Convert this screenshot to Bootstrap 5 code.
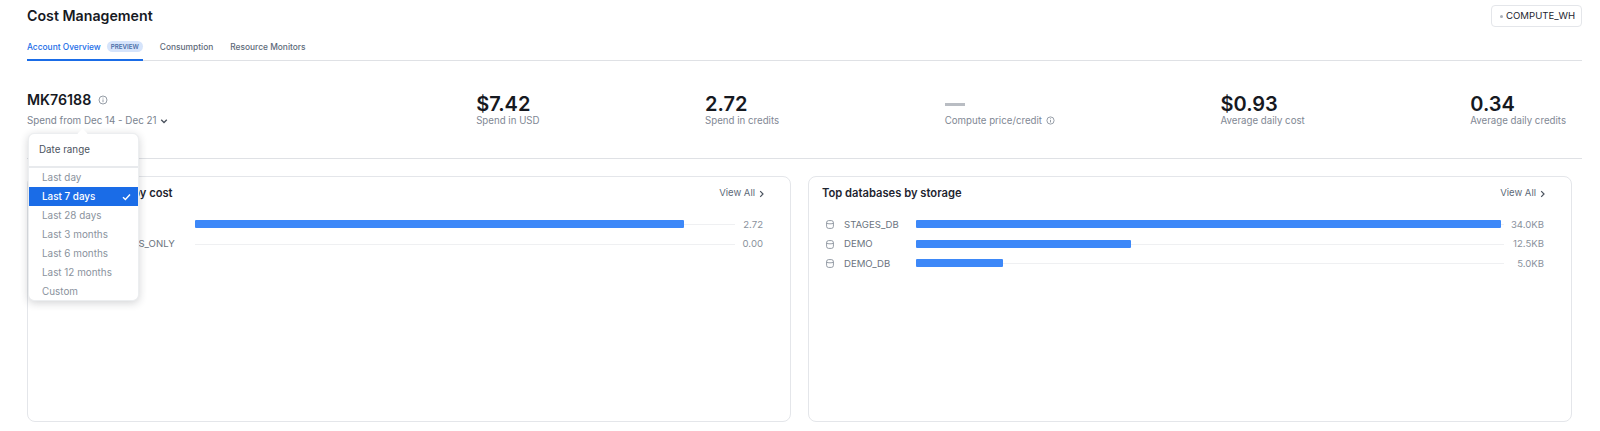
<!doctype html>
<html lang="en">
<head>
<meta charset="utf-8">
<title>Cost Management</title>
<link rel="stylesheet" href="https://cdn.jsdelivr.net/npm/bootstrap@5.3.0/dist/css/bootstrap.min.css">
<style>
html,body{height:431px;overflow:hidden}
body{font-family:Inter,"Liberation Sans",sans-serif;background:#fff;color:#1e252f}
.shell{position:relative;padding:5px 18px 0 27px;height:431px}
.topbar{height:29px}
.page-title{font-size:14.2px;font-weight:600;margin:2px 0 0;line-height:18px;color:#16191f}
.wh-btn{width:91px;height:22px;border:1px solid #e4e6ea;border-radius:4px;background:#fff;font-size:9.6px;color:#1e252f;padding:0 0 0 8px;gap:3px}
.wh-dot{width:3px;height:3px;border-radius:50%;background:#a9afb8}
.tabbar{border-bottom:1px solid #dfe1e5;height:27px;gap:17px}
.tab-item{font-size:8.4px;font-weight:500;color:#5d6a79;height:27px;padding-top:8px;line-height:11px;white-space:nowrap}
.tab-active{color:#1a6ce7;border-bottom:2px solid #1a6ce7;gap:6px;margin-bottom:-1px;height:27px}
.preview-pill{font-size:6.2px;font-weight:600;background:#d6e4fb;color:#4d6fa8;border-radius:6px;padding:0 4px;height:11px;line-height:11px;width:36px;text-align:center;margin-top:-1px}
.stats{height:98px;border-bottom:1px solid #dfe1e5;padding:29px 16px 0 0}
.acct{font-size:14.2px;font-weight:600;color:#16191f;line-height:20px;gap:7px}
.sub{font-size:9.7px;color:#7f8894;line-height:13px;white-space:nowrap}
.acct-sub{font-size:9.8px;margin-top:4px;gap:4px;color:#7a838f}
.stat-item{margin-left:165.500px;padding-top:2px}
.stat-first{margin-left:auto}
.stat-val{font-size:20px;font-weight:600;line-height:24px;color:#16191f;height:22px}
.stat-dash{padding-top:11px}
.dash{display:block;width:20px;height:3px;background:#b9bdc3}
.cards{gap:17px;padding:17px 10px 0 0}
.panel{flex:1 1 0;height:246px;border:1px solid #e4e6ea;border-radius:8px;padding:6px 13px;min-width:0}
.panel-title{font-size:11.2px;font-weight:600;color:#1e252f;line-height:14px}
.view-all{font-size:9.5px;color:#5d6a79;gap:3px;text-decoration:none;margin-right:12px;margin-top:1px}
.panel-head{height:14px;margin:3px 0 15px}
.rows{padding-right:14px}
.bar-row{height:19.5px;font-size:9.6px;color:#6b7480}
.bar-label{width:94px;gap:10px;white-space:nowrap;padding-left:4px;flex:none}
.bar-label-wide{width:154px}
.bar-track{flex:1 1 0;height:1px;background:#eff0f2;position:relative}
.bar-fill{position:absolute;left:0;top:-4px;height:8px;background:#3d88f8;border-radius:1px}
.bar-val{width:40px;text-align:right;flex:none;color:#8a929d}
.bar-val-narrow{width:28px}
.date-menu{display:block;left:28px;top:133px;width:111px;height:168px;padding:0;font-size:9.5px;border:1px solid #eceef0;border-radius:6px;box-shadow:0 2px 8px rgba(30,37,47,.2);--bs-dropdown-min-width:0;z-index:5}
.date-menu::before{content:"";position:absolute;left:50px;top:-4px;width:7px;height:7px;background:#fff;transform:rotate(45deg)}
.date-menu .dropdown-header{font-size:9.8px;color:#4b535e;padding:9px 10px 0;height:32px;line-height:14px;position:relative}
.date-menu .dropdown-divider{margin:0;border-color:#e8eaed;border-top-width:2px}
.date-menu .dropdown-item{font-size:9.9px;color:#8a929d;padding:0 13px;height:19px;line-height:19px}
.date-menu .dropdown-item.active{background:#1a6ce7;color:#fff;font-weight:500}
.check-mark{margin-right:-6px}
</style>
</head>
<body>
<div class="shell">
  <div class="topbar d-flex justify-content-between align-items-start">
    <h1 class="page-title">Cost Management</h1>
    <button class="wh-btn d-flex align-items-center" type="button"><span class="wh-dot"></span>COMPUTE_WH</button>
  </div>
  <nav class="tabbar d-flex">
    <div class="tab-item tab-active d-flex">Account Overview <span class="preview-pill">PREVIEW</span></div>
    <div class="tab-item">Consumption</div>
    <div class="tab-item">Resource Monitors</div>
  </nav>
  <section class="stats d-flex">
    <div>
      <div class="acct d-flex align-items-center">MK76188
        <svg width="10" height="10" viewBox="0 0 10 10" fill="none" stroke="#8a929d" stroke-width=".9"><circle cx="5" cy="5" r="4"/><path d="M5 4.400v2.800M5 2.600v.9"/></svg>
      </div>
      <div class="sub acct-sub d-flex align-items-center">Spend from Dec 14 - Dec 21
        <svg width="8" height="8" viewBox="0 0 8 8" fill="none" stroke="#4b535e" stroke-width="1.3"><path d="M1.200 2.800 4 5.500l2.800-2.700"/></svg>
      </div>
    </div>
    <div class="stat-item stat-first"><div class="stat-val">$7.42</div><div class="sub">Spend in USD</div></div>
    <div class="stat-item"><div class="stat-val">2.72</div><div class="sub">Spend in credits</div></div>
    <div class="stat-item"><div class="stat-val stat-dash"><span class="dash"></span></div><div class="sub d-flex align-items-center gap-1">Compute price/credit
      <svg width="9" height="9" viewBox="0 0 10 10" fill="none" stroke="#7f8894" stroke-width=".9"><circle cx="5" cy="5" r="4"/><path d="M5 4.400v2.800M5 2.600v.9"/></svg></div></div>
    <div class="stat-item"><div class="stat-val">$0.93</div><div class="sub">Average daily cost</div></div>
    <div class="stat-item"><div class="stat-val">0.34</div><div class="sub">Average daily credits</div></div>
  </section>
  <section class="cards d-flex">
    <div class="panel">
      <div class="panel-head d-flex justify-content-between align-items-center">
        <div class="panel-title">Top warehouses by cost</div>
        <a class="view-all d-flex align-items-center" href="#">View All <svg width="7" height="8" viewBox="0 0 7 8" fill="none" stroke="#4b535e" stroke-width="1.2"><path d="M2.200 1.200 5 4 2.200 6.800"/></svg></a>
      </div>
      <div class="rows">
      <div class="bar-row d-flex align-items-center"><div class="bar-label bar-label-wide d-flex align-items-center">COMPUTE_WH</div>
        <div class="bar-track"><div class="bar-fill" style="width:90.5%"></div></div><div class="bar-val bar-val-narrow">2.72</div></div>
      <div class="bar-row d-flex align-items-center"><div class="bar-label bar-label-wide d-flex align-items-center"><span class="ps-3">CLOUD_SERVICES_ONLY</span></div>
        <div class="bar-track"></div><div class="bar-val bar-val-narrow">0.00</div></div>
      </div>
    </div>
    <div class="panel">
      <div class="panel-head d-flex justify-content-between align-items-center">
        <div class="panel-title">Top databases by storage</div>
        <a class="view-all d-flex align-items-center" href="#">View All <svg width="7" height="8" viewBox="0 0 7 8" fill="none" stroke="#4b535e" stroke-width="1.2"><path d="M2.200 1.200 5 4 2.200 6.800"/></svg></a>
      </div>
      <div class="rows">
      <div class="bar-row d-flex align-items-center"><div class="bar-label d-flex align-items-center">
        <svg width="8" height="9" viewBox="0 0 8 9" fill="none" stroke="#7a838f" stroke-width=".8"><rect x=".6" y=".6" width="6.800" height="7.800" rx="2"/><path d="M.6 3.100c1.500 1 5.300 1 6.800 0"/></svg>STAGES_DB</div>
        <div class="bar-track"><div class="bar-fill" style="width:99.5%"></div></div><div class="bar-val">34.0KB</div></div>
      <div class="bar-row d-flex align-items-center"><div class="bar-label d-flex align-items-center">
        <svg width="8" height="9" viewBox="0 0 8 9" fill="none" stroke="#7a838f" stroke-width=".8"><rect x=".6" y=".6" width="6.800" height="7.800" rx="2"/><path d="M.6 3.100c1.500 1 5.300 1 6.800 0"/></svg>DEMO</div>
        <div class="bar-track"><div class="bar-fill" style="width:36.6%"></div></div><div class="bar-val">12.5KB</div></div>
      <div class="bar-row d-flex align-items-center"><div class="bar-label d-flex align-items-center">
        <svg width="8" height="9" viewBox="0 0 8 9" fill="none" stroke="#7a838f" stroke-width=".8"><rect x=".6" y=".6" width="6.800" height="7.800" rx="2"/><path d="M.6 3.100c1.500 1 5.300 1 6.800 0"/></svg>DEMO_DB</div>
        <div class="bar-track"><div class="bar-fill" style="width:14.8%"></div></div><div class="bar-val">5.0KB</div></div>
      </div>
    </div>
  </section>
  <div class="dropdown-menu show date-menu">
    <div class="dropdown-header">Date range</div>
    <hr class="dropdown-divider">
    <a class="dropdown-item" href="#">Last day</a>
    <a class="dropdown-item active d-flex justify-content-between align-items-center" href="#">Last 7 days
      <svg class="check-mark" width="9" height="8" viewBox="0 0 9 8" fill="none" stroke="#fff" stroke-width="1.4"><path d="M1 4.200 3.400 6.500 8 1.500"/></svg></a>
    <a class="dropdown-item" href="#">Last 28 days</a>
    <a class="dropdown-item" href="#">Last 3 months</a>
    <a class="dropdown-item" href="#">Last 6 months</a>
    <a class="dropdown-item" href="#">Last 12 months</a>
    <a class="dropdown-item" href="#">Custom</a>
  </div>
</div>
<script src="https://cdn.jsdelivr.net/npm/bootstrap@5.3.0/dist/js/bootstrap.bundle.min.js"></script>
</body>
</html>
